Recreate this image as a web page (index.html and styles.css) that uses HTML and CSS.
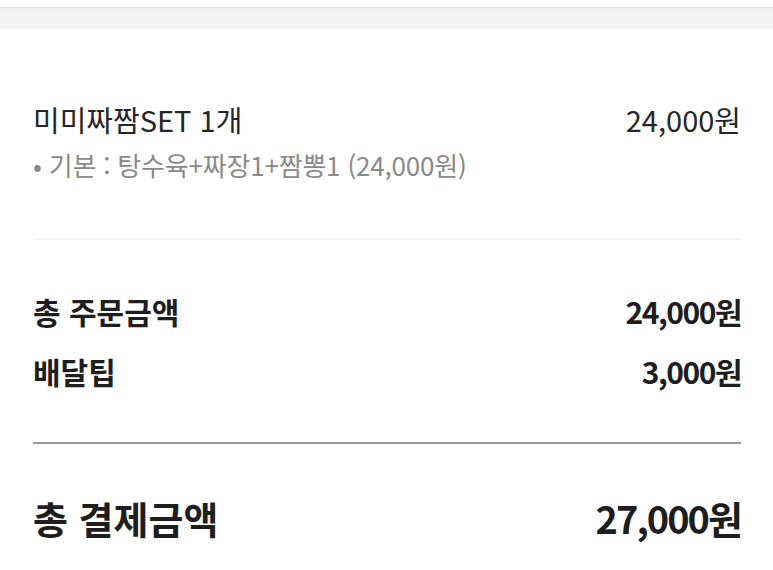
FILE: index.html
```html
<!DOCTYPE html>
<html lang="ko">
<head>
    <meta charset="UTF-8">
    <meta name="viewport" content="width=device-width, initial-scale=1.0">
    <title>주문 확인</title>
    <link rel="stylesheet" href="styles.css">
</head>
<body>
    <div class="topbar"></div>
    <div class="order">
        <div class="item">
            <div class="row">
                <span class="item-name">미미짜짬SET 1개</span>
                <span class="item-price">24,000원</span>
            </div>
            <p class="option">• 기본 : 탕수육+짜장1+짬뽕1 (24,000원)</p>
        </div>
        <div class="summary">
            <div class="row sum-row">
                <span>총 주문금액</span>
                <span class="sum-price">24,000원</span>
            </div>
            <div class="row sum-row">
                <span>배달팁</span>
                <span class="sum-price">3,000원</span>
            </div>
        </div>
        <div class="total">
            <div class="row">
                <span class="total-label">총 결제금액</span>
                <span class="total-price">27,000원</span>
            </div>
            <div class="next-title">결제수단</div>
        </div>
    </div>
</body>
</html>
```

FILE: styles.css
```css
body {
    font-family: "Noto Sans CJK KR", "Noto Sans", sans-serif;
    background-color: #fff;
    color: #222;
    margin: 0;
    padding: 0;
}
.topbar {
    margin-top: 7px;
    height: 21px;
    border-top: 1px solid #e2e2e2;
    background: linear-gradient(#f2f2f2, #f5f5f5);
}
.order {
    padding: 0 32px 0 33px;
}
.row {
    display: flex;
    justify-content: space-between;
    align-items: center;
}
.item {
    padding: 72px 0 58px;
    border-bottom: 2px solid #f3f3f3;
}
.item-name, .item-price {
    font-size: 29px;
    line-height: 36px;
    color: #262626;
}
.option {
    margin: 13px 0 0;
    font-size: 26px;
    line-height: 30px;
    letter-spacing: -0.2px;
    color: #8a8a8a;
}
.summary {
    padding: 51px 0 51px;
    border-bottom: 2px solid #999;
}
.sum-row {
    font-size: 30px;
    line-height: 40px;
    font-weight: bold;
    color: #1e1e1e;
}
.sum-price {
    letter-spacing: -1.5px;
}
.sum-row + .sum-row {
    margin-top: 20px;
}
.total {
    padding-top: 50px;
}
.total-label, .total-price {
    font-size: 38px;
    line-height: 48px;
    font-weight: bold;
    color: #1e1e1e;
}
.total-price {
    letter-spacing: -2px;
}
.next-title {
    margin-top: 24px;
    font-size: 28px;
    line-height: 36px;
    font-weight: bold;
}
```
